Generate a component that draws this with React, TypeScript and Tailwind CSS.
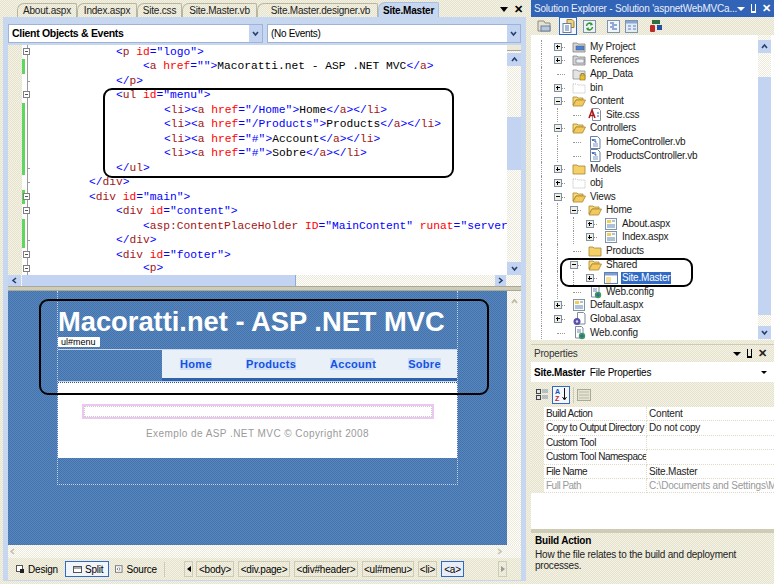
import type { ReactNode } from 'react';

const beige = 'bg-[repeating-conic-gradient(#e6e3cc_0_25%,#f4f2e6_0_50%)] bg-[length:2px_2px]';
const paleTrack = 'bg-[repeating-conic-gradient(#ffffff_0_25%,#ece9d8_0_50%)] bg-[length:2px_2px]';
const designBlue = 'bg-[repeating-conic-gradient(#4272b4_0_25%,#5a88b6_0_50%)] bg-[length:2px_2px]';
const scrollBtn = 'bg-[#c3d4f3]';

interface CodeLine {
  text: string;
  indent: string;
  green?: boolean;
  marker?: 'box' | 'end';
}

const codeLines: CodeLine[] = [
  { text: '<p id="logo">', indent: 'pl-[86px]', marker: 'box' },
  { text: '<a href="">Macoratti.net - ASP .NET MVC</a>', indent: 'pl-[113px]', green: true },
  { text: '</p>', indent: 'pl-[86px]', marker: 'end' },
  { text: '<ul id="menu">', indent: 'pl-[86px]', marker: 'box' },
  { text: '<li><a href="/Home">Home</a></li>', indent: 'pl-[134px]', green: true },
  { text: '<li><a href="/Products">Products</a></li>', indent: 'pl-[134px]', green: true },
  { text: '<li><a href="#">Account</a></li>', indent: 'pl-[134px]', green: true },
  { text: '<li><a href="#">Sobre</a></li>', indent: 'pl-[134px]', green: true },
  { text: '</ul>', indent: 'pl-[86px]', green: true, marker: 'end' },
  { text: '</div>', indent: 'pl-[59px]', marker: 'end' },
  { text: '<div id="main">', indent: 'pl-[59px]', green: true, marker: 'box' },
  { text: '<div id="content">', indent: 'pl-[86px]', marker: 'box' },
  { text: '<asp:ContentPlaceHolder ID="MainContent" runat="server', indent: 'pl-[113px]', green: true },
  { text: '</div>', indent: 'pl-[86px]', green: true, marker: 'end' },
  { text: '<div id="footer">', indent: 'pl-[86px]', marker: 'box' },
  { text: '<p>', indent: 'pl-[113px]', marker: 'box' },
];

// small markup colouriser for the source pane
function colorize(line: string) {
  return line.split(/(<\/?[\w:]+|\s\w+=|"[^"]*"?|>|<\/)/).map((part, i) => {
    if (!part) return null;
    if (part.startsWith('<')) {
      const close = part.startsWith('</') ? 2 : 1;
      return (
        <span key={i}>
          <span className="text-[#0000ff]">{part.slice(0, close)}</span>
          <span className="text-[#a31515]">{part.slice(close)}</span>
        </span>
      );
    }
    if (part.endsWith('=') && part.startsWith(' ')) {
      return (
        <span key={i}>
          <span className="text-[#ff0000]">{part.slice(0, -1)}</span>
          <span className="text-[#0000ff]">=</span>
        </span>
      );
    }
    if (part.startsWith('"') || part === '>') {
      return <span key={i} className="text-[#0000ff]">{part}</span>;
    }
    return <span key={i} className="text-black">{part}</span>;
  });
}

function Chevron({ dir, color = '#2a3f6b' }: { dir: 'up' | 'down' | 'left' | 'right'; color?: string }) {
  const d = {
    up: 'M2 6 L4.5 3 L7 6',
    down: 'M2 3 L4.5 6 L7 3',
    left: 'M6 2 L3 4.5 L6 7',
    right: 'M3 2 L6 4.5 L3 7',
  }[dir];
  return (
    <svg width="9" height="9" viewBox="0 0 9 9">
      <path d={d} fill="none" stroke={color} strokeWidth="1.6" />
    </svg>
  );
}

function Combo({ label, width, bold }: { label: string; width: string; bold?: boolean }) {
  return (
    <div className={`${width} h-[19px] bg-white border border-[#9fb3d6] flex items-center justify-between pl-[3px]`}>
      <span className={bold ? 'font-bold text-[10.5px] tracking-[-0.3px]' : 'text-[10px] tracking-[-0.3px]'}>{label}</span>
      <span className={`w-[13px] h-[17px] ${scrollBtn} flex items-center justify-center`}>
        <Chevron dir="down" />
      </span>
    </div>
  );
}

function DocTab({ label, width, active }: { label: string; width: string; active?: boolean }) {
  return (
    <div
      className={`${width} flex items-center justify-center rounded-tl-[7px] rounded-tr-[2px] border-t border-r border-l ${
        active
          ? 'h-[15px] bg-[#c7d7ef] border-[#a9bfe2] font-bold text-black'
          : 'h-[14px] border-[#b9b69f] text-[#222]'
      }`}
    >
      {label}
    </div>
  );
}

function EditorPane() {
  return (
    <div className="flex h-[230px] bg-white">
      <div className="w-[499px] h-[230px] overflow-hidden font-['Liberation_Mono'] text-[11.25px] leading-[14.47px] whitespace-pre">
        {codeLines.map((line, i) => (
          <div key={i} className="flex h-[14.47px] last:h-[12.9px] last:leading-[12.9px]">
            <div className={`w-[14px] shrink-0 ${beige}`} />
            <div className={`w-[3px] shrink-0 ${line.green ? 'bg-[#5fd75f]' : 'bg-white'}`} />
            <div className="relative w-[5px] shrink-0 flex justify-center">
              <div className="w-px h-full bg-[#9a9a9a]" />
              {line.marker === 'box' && (
                <div className="absolute top-[3px] left-[-2px] w-[7px] h-[7px] bg-white border border-[#808080] flex items-center justify-center">
                  <div className="w-[3px] h-px bg-[#555]" />
                </div>
              )}
              {line.marker === 'end' && <div className="absolute top-[7px] left-[2px] w-[3px] h-px bg-[#9a9a9a]" />}
            </div>
            <div className={`${line.indent} min-w-0`}>{colorize(line.text)}</div>
          </div>
        ))}
      </div>
      <div className={`w-[14px] h-[230px] flex flex-col ${paleTrack}`}>
        <div className="h-[6px] bg-[#ece9d8] border-b border-[#aca899]" />
        <div className={`h-[13px] mt-[2px] ${scrollBtn} flex items-center justify-center`}>
          <Chevron dir="up" />
        </div>
        <div className="h-[51px]" />
        <div className="h-[53px] bg-[#c3d4f3]" />
        <div className="grow" />
        <div className={`h-[13px] ${scrollBtn} flex items-center justify-center`}>
          <Chevron dir="down" />
        </div>
      </div>
    </div>
  );
}

function HScroll({ disabled }: { disabled?: boolean }) {
  if (disabled) {
    return (
      <div className={`flex h-[13px] items-center justify-between pr-[17px] ${paleTrack}`}>
        <Chevron dir="left" color="#c4c1ad" />
        <Chevron dir="right" color="#c4c1ad" />
      </div>
    );
  }
  return (
    <div className={`flex h-[11px] ${paleTrack}`}>
      <div className={`w-[13px] ${scrollBtn} flex items-center justify-center`}>
        <Chevron dir="left" />
      </div>
      <div className="w-[274px] bg-[#c3d4f3] border-r border-[#8fa9dc] ml-px" />
      <div className="grow" />
      <div className={`w-[11px] mr-[15px] ${scrollBtn} flex items-center justify-center`}>
        <Chevron dir="right" />
      </div>
    </div>
  );
}

const menuItems = [
  { label: 'Home', width: 'w-[32px]' },
  { label: 'Products', width: 'w-[50px]' },
  { label: 'Account', width: 'w-[44px]' },
  { label: 'Sobre', width: 'w-[33px]' },
];

function DesignPane() {
  return (
    <div className="flex h-[254px]">
      <div className={`w-[499px] h-[254px] pl-[49px] ${designBlue}`}>
        <div className="w-[401px] h-[194px] border-x border-b border-dotted border-[#c9d7e8]">
          <div className="h-[46px] pt-[15px] text-white font-bold text-[27.3px] leading-[31px] font-['Liberation_Sans'] whitespace-nowrap">
            Macoratti.net - ASP .NET MVC
          </div>
          <div className="w-[42px] h-[10px] bg-white rounded-[1px] text-black text-[9px] leading-[10px] pl-[3px] font-['Liberation_Sans']">
            ul#menu
          </div>
          <div className="flex h-[33px] mt-[2px] border-y border-[#c9d7e8]">
            <div className="w-[104px]" />
            <div className="grow flex flex-col">
              <div className="h-[28px] bg-[#eaf0f8] flex items-center gap-[34px] pl-[18px]">
                {menuItems.map((m) => (
                  <span
                    key={m.label}
                    className={`${m.width} text-center bg-[#cfe0f5] text-[#1450e6] font-bold text-[11px] leading-[12px] tracking-[0.3px] font-['Liberation_Sans'] whitespace-nowrap`}
                  >
                    {m.label}
                  </span>
                ))}
              </div>
              <div className="grow bg-[#2f62ad]" />
            </div>
          </div>
          <div className="h-[76px] bg-white border-t border-dotted border-[#30509a] pt-[21px]">
            <div className="ml-[24px] w-[352px] h-[15px] border-2 border-[#ecc8f0]">
              <div className="h-full border border-dotted border-[#cccccc]" />
            </div>
            <p className="mt-[9px] text-center text-[#9a9a9a] text-[10px] leading-[12px] tracking-[0.43px] font-['Liberation_Sans']">
              Exemplo de ASP .NET MVC © Copyright 2008
            </p>
          </div>
        </div>
      </div>
      <div className={`w-[14px] ${paleTrack}`}>
        <div className="h-[4px]" />
        <div className="h-[13px] flex items-center justify-center">
          <Chevron dir="up" color="#b9b69f" />
        </div>
      </div>
    </div>
  );
}

function PathTag({ label, width, active }: { label: string; width: string; active?: boolean }) {
  return (
    <span
      className={`${width} h-[16px] flex items-center justify-center border ${
        active ? 'border-[#316ac5] bg-[#e8eef9]' : 'border-[#cfccb6]'
      }`}
    >
      {label}
    </span>
  );
}

function BottomBar() {
  return (
    <div className="flex items-center h-[22px] text-[10px] tracking-[-0.2px]">
      <div className="w-[8px]" />
      <div className="w-[49px] flex items-center gap-[4px]">
        <svg width="8" height="9" viewBox="0 0 8 9">
          <rect x="0.5" y="0.5" width="6" height="6" fill="#fff" stroke="#555" />
          <rect x="4" y="4" width="4" height="4" fill="#222" />
        </svg>
        <span>Design</span>
      </div>
      <div className="w-[44px] h-[16px] bg-[#f0f4fb] border border-[#316ac5] flex items-center gap-[3px] pl-[7px]">
        <svg width="9" height="7" viewBox="0 0 9 7">
          <rect x="0.5" y="0.5" width="8" height="6" fill="#fff" stroke="#555" />
          <path d="M1 2h7" stroke="#555" />
        </svg>
        <span>Split</span>
      </div>
      <div className="w-[6px]" />
      <div className="w-[42px] flex items-center gap-[4px]">
        <svg width="8" height="8" viewBox="0 0 8 8">
          <rect x="0.5" y="0.5" width="7" height="7" fill="#fff" stroke="#777" />
          <path d="M3.500 2.500L2 4l1.500 1.500M5 2.500v3" fill="none" stroke="#555" strokeWidth="0.8" />
        </svg>
        <span>Source</span>
      </div>
      <div className="w-px h-[15px] ml-[7px] bg-[#cfccb6]" />
      <div className="w-[19px]" />
      <span className="w-[9px] h-[16px] border border-[#cfccb6] flex items-center justify-center">
        <span className="border-y-[3px] border-r-[4px] border-y-transparent border-r-black" />
      </span>
      <div className="ml-[3px] flex gap-[4px]">
        <PathTag label="<body>" width="w-[38px]" />
        <PathTag label="<div.page>" width="w-[52px]" />
        <PathTag label="<div#header>" width="w-[64px]" />
        <PathTag label="<ul#menu>" width="w-[52px]" />
        <PathTag label="<li>" width="w-[19px]" />
        <PathTag label="<a>" width="w-[23px]" active />
      </div>
      <div className="w-[34px]" />
      <span className="w-[9px] h-[16px] border border-[#cfccb6] flex items-center justify-center">
        <span className="border-y-[3px] border-l-[4px] border-y-transparent border-l-[#999]" />
      </span>
    </div>
  );
}

function LeftColumn() {
  return (
    <div className="w-[531px] h-[584px] shrink-0 pl-[3px] pr-[5px]">
      <div className="relative h-[17px] flex items-end text-[10px] tracking-[-0.2px] pl-[14px]">
        <DocTab label="About.aspx" width="w-[60px]" />
        <DocTab label="Index.aspx" width="w-[60px]" />
        <DocTab label="Site.css" width="w-[45px]" />
        <DocTab label="Site.Master.vb" width="w-[75px]" />
        <DocTab label="Site.Master.designer.vb" width="w-[121px] pl-[6px]" />
        <DocTab label="Site.Master" width="w-[61px]" active />
        <div className="grow flex items-center justify-end gap-[6px] pr-[3px] h-[15px] text-[11px]">
          <span className="border-x-[4px] border-t-[5px] border-x-transparent border-t-black" />
          <span className="font-bold leading-none">✕</span>
        </div>
      </div>
      <div className="h-[564px] border-x-[5px] border-t-[5px] border-b border-[#c7d7ef]">
        <div className="flex justify-between bg-[#c7d7ef] h-[23px] pt-[2px]">
          <Combo label="Client Objects & Events" width="w-[255px]" bold />
          <Combo label="(No Events)" width="w-[254px]" />
        </div>
        <EditorPane />
        <HScroll />
        <div className="h-[5px] bg-[#cfccb6] border-y border-[#aca899]" />
        <DesignPane />
        <HScroll disabled />
        <BottomBar />
      </div>
      {/* hand-drawn callouts over the markup and the design view */}
      <div className="absolute left-[103px] top-[88px] w-[351px] h-[90px] border-2 border-black rounded-[9px]" />
      <div className="absolute left-[39px] top-[299px] w-[450px] h-[96px] border-2 border-black rounded-[9px]" />
    </div>
  );
}

/* ---------- tree icons ---------- */

function FolderOpen() {
  return (
    <svg width="14" height="12" viewBox="0 0 14 12">
      <path d="M1 2h4l1 1h5v2H4L1 10z" fill="#f7d875" stroke="#a8862e" strokeWidth="0.8" />
      <path d="M4 5h9.500l-3 6H1z" fill="#f3c95e" stroke="#a8862e" strokeWidth="0.8" />
    </svg>
  );
}

function FolderClosed({ empty }: { empty?: boolean }) {
  return (
    <svg width="14" height="12" viewBox="0 0 14 12">
      <path
        d="M1 2h4l1 1h7v8H1z"
        fill={empty ? 'none' : '#f5cf68'}
        stroke={empty ? '#aaa' : '#a8862e'}
        strokeWidth="0.8"
        strokeDasharray={empty ? '1 1' : undefined}
      />
    </svg>
  );
}

function DataFolder() {
  return (
    <svg width="14" height="13" viewBox="0 0 14 13">
      <path d="M1 2h4l1 1h7v8H1z" fill="#e4e4e4" stroke="#909090" strokeWidth="0.8" />
      <rect x="8" y="7" width="5" height="5" fill="#e8c030" stroke="#8a7010" strokeWidth="0.6" />
      <path d="M9 7V5.500h3V7" fill="none" stroke="#8a7010" strokeWidth="0.8" />
    </svg>
  );
}

function PageIcon({ kind }: { kind: 'aspx' | 'vb' | 'css' | 'config' | 'asax' | 'master' | 'project' | 'refs' }) {
  if (kind === 'project' || kind === 'refs') {
    return (
      <svg width="14" height="12" viewBox="0 0 14 12">
        <path d="M1 2h4l1 1h7v8H1z" fill="#d5d5d5" stroke="#808080" strokeWidth="0.8" />
        <rect x="4" y="5" width="8" height="4" fill={kind === 'project' ? '#4a80d8' : '#eef2f8'} stroke="#556" strokeWidth="0.5" />
      </svg>
    );
  }
  if (kind === 'master') {
    return (
      <svg width="14" height="12" viewBox="0 0 14 12">
        <rect x="0.5" y="0.5" width="13" height="11" fill="#fff" stroke="#5f7fb0" />
        <rect x="1" y="1" width="12" height="2.500" fill="#7d9fd6" />
        <rect x="2" y="5" width="5" height="6" fill="#f7df93" />
      </svg>
    );
  }
  if (kind === 'aspx') {
    return (
      <svg width="14" height="12" viewBox="0 0 14 12">
        <rect x="1.500" y="0.5" width="11" height="11" fill="#fdfcf0" stroke="#7f93ac" />
        <rect x="3" y="2" width="4" height="3" fill="#f2cc5c" />
        <path d="M8 3h3M3 7h8M3 9h8" stroke="#5f86c4" />
      </svg>
    );
  }
  if (kind === 'vb') {
    return (
      <svg width="14" height="13" viewBox="0 0 14 13">
        <path d="M2.500.5h7l2.500 2.500v9.500h-9.500z" fill="#fff" stroke="#6a7f9e" />
        <path d="M4 3l1 2 1-2M7 3v3h1.500" stroke="#2050b0" fill="none" />
        <path d="M5 8h5M5 10h5" stroke="#7a97c8" />
      </svg>
    );
  }
  if (kind === 'css') {
    return (
      <svg width="14" height="13" viewBox="0 0 14 13">
        <path d="M4.500.5h6l2 2v10h-8z" fill="#fff" stroke="#8a8aa0" />
        <path d="M1 10L4 2l3 8M2.200 7.500h3.600" stroke="#b01818" fill="none" strokeWidth="1.500" />
        <path d="M9 5h2M9 8h2" stroke="#3060c0" />
      </svg>
    );
  }
  if (kind === 'asax') {
    return (
      <svg width="14" height="14" viewBox="0 0 14 14">
        <path d="M5.500.5h6l1.500 1.500v10h-7.500z" fill="#fff" stroke="#7f8aa0" />
        <circle cx="5" cy="9.500" r="3.500" fill="#5a50a8" />
        <circle cx="5" cy="9.500" r="1.200" fill="#d8d4f0" />
      </svg>
    );
  }
  return (
    <svg width="14" height="14" viewBox="0 0 14 14">
      <path d="M3.500.5h6l1.500 1.500v10h-7.500z" fill="#fff" stroke="#7f8aa0" />
      <path d="M5 4h4M5 6h4" stroke="#6f88b8" />
      <circle cx="10" cy="10" r="3.200" fill="#3f9a62" />
      <path d="M8 10h4M10 8v4" stroke="#2b56b5" strokeWidth="0.8" />
    </svg>
  );
}

function ExpandBox({ open }: { open?: boolean }) {
  return (
    <span className="relative w-[8px] h-[8px] bg-[#f1efe2] border border-[#7f8fa6] flex items-center justify-center">
      <span className="w-[4px] h-px bg-black" />
      {!open && <span className="absolute w-px h-[4px] bg-black" />}
    </span>
  );
}

interface TreeItem {
  label: string;
  level: number;
  icon: ReactNode;
  toggle?: 'plus' | 'minus';
  selected?: boolean;
}

const treeItems: TreeItem[] = [
  { label: 'My Project', level: 0, toggle: 'plus', icon: <PageIcon kind="project" /> },
  { label: 'References', level: 0, toggle: 'plus', icon: <PageIcon kind="refs" /> },
  { label: 'App_Data', level: 0, icon: <DataFolder /> },
  { label: 'bin', level: 0, toggle: 'plus', icon: <FolderClosed empty /> },
  { label: 'Content', level: 0, toggle: 'minus', icon: <FolderOpen /> },
  { label: 'Site.css', level: 1, icon: <PageIcon kind="css" /> },
  { label: 'Controllers', level: 0, toggle: 'minus', icon: <FolderOpen /> },
  { label: 'HomeController.vb', level: 1, icon: <PageIcon kind="vb" /> },
  { label: 'ProductsController.vb', level: 1, icon: <PageIcon kind="vb" /> },
  { label: 'Models', level: 0, toggle: 'plus', icon: <FolderClosed /> },
  { label: 'obj', level: 0, toggle: 'plus', icon: <FolderClosed empty /> },
  { label: 'Views', level: 0, toggle: 'minus', icon: <FolderOpen /> },
  { label: 'Home', level: 1, toggle: 'minus', icon: <FolderOpen /> },
  { label: 'About.aspx', level: 2, toggle: 'plus', icon: <PageIcon kind="aspx" /> },
  { label: 'Index.aspx', level: 2, toggle: 'plus', icon: <PageIcon kind="aspx" /> },
  { label: 'Products', level: 1, icon: <FolderClosed /> },
  { label: 'Shared', level: 1, toggle: 'minus', icon: <FolderOpen /> },
  { label: 'Site.Master', level: 2, toggle: 'plus', icon: <PageIcon kind="master" />, selected: true },
  { label: 'Web.config', level: 1, icon: <PageIcon kind="config" /> },
  { label: 'Default.aspx', level: 0, toggle: 'plus', icon: <PageIcon kind="aspx" /> },
  { label: 'Global.asax', level: 0, toggle: 'plus', icon: <PageIcon kind="asax" /> },
  { label: 'Web.config', level: 0, icon: <PageIcon kind="config" /> },
];

function Guide() {
  return (
    <div className="w-[16px] h-full shrink-0 pl-[8px]">
      <div className="h-full border-l border-dotted border-[#999]" />
    </div>
  );
}

function TreeRow({ item }: { item: TreeItem }) {
  return (
    <div className="flex items-center h-[13.62px]">
      <Guide />
      {item.level > 0 && <Guide />}
      {item.level > 1 && <Guide />}
      <div className="relative w-[16px] h-full shrink-0 flex items-center justify-center">
        <div className="absolute left-[8px] right-0 top-1/2 border-t border-dotted border-[#999]" />
        {item.toggle && (
          <div className="relative pl-px">
            <ExpandBox open={item.toggle === 'minus'} />
          </div>
        )}
      </div>
      <div className="w-[14px] ml-[7px] shrink-0 flex items-center justify-center">{item.icon}</div>
      <span
        className={`ml-[3px] px-px leading-[12px] whitespace-nowrap ${item.selected ? 'bg-[#316ac5] text-white' : ''}`}
      >
        {item.label}
      </span>
    </div>
  );
}

function PanelTitle({ label, active }: { label: string; active?: boolean }) {
  return (
    <div
      className={`h-[17px] flex items-center justify-between pl-[3px] pr-[7px] ${
        active ? 'bg-[#3163b6] text-[#e8eefb]' : `${beige} text-[#333]`
      }`}
    >
      <span className="whitespace-nowrap">{label}</span>
      <div className={`flex items-center gap-[6px] ${active ? 'text-white' : 'text-[#222]'}`}>
        <span
          className={`border-x-[4px] border-t-[4px] border-x-transparent ${
            active ? 'border-t-white' : 'border-t-black'
          }`}
        />
        <span className={`w-[5px] h-[9px] border-x-[1.5px] border-b-2 ${active ? 'border-white' : 'border-black'}`} />
        <span className="font-bold text-[11px] leading-none">✕</span>
      </div>
    </div>
  );
}

function ToolBtn({ active, margin, children }: { active?: boolean; margin: string; children: ReactNode }) {
  return (
    <span
      className={`${margin} w-[18px] h-[18px] shrink-0 flex items-center justify-center ${
        active ? 'border border-[#316ac5] bg-[#f4f7fc]' : ''
      }`}
    >
      {children}
    </span>
  );
}

const properties = [
  { name: 'Build Action', value: 'Content' },
  { name: 'Copy to Output Directory', value: 'Do not copy' },
  { name: 'Custom Tool', value: '' },
  { name: 'Custom Tool Namespace', value: '' },
  { name: 'File Name', value: 'Site.Master' },
  { name: 'Full Path', value: 'C:\\Documents and Settings\\M', muted: true },
];

function RightColumn() {
  return (
    <div className="relative w-[243px] h-[584px] flex flex-col text-[10px] tracking-[-0.2px]">
      <PanelTitle label="Solution Explorer - Solution 'aspnetWebMVCa... " active />
      <div className={`h-[18px] flex items-center pl-[4px] ${beige}`}>
        <ToolBtn margin="ml-0">
          <svg width="14" height="13" viewBox="0 0 14 13">
            <path d="M1 1h6l1 2h5v8H1z" fill="#e4e2d2" stroke="#8a8a80" />
            <rect x="4" y="6" width="9" height="5" fill="#b9c7dd" stroke="#6a7f9e" />
          </svg>
        </ToolBtn>
        <ToolBtn margin="ml-[6px]" active>
          <svg width="13" height="14" viewBox="0 0 13 14">
            <path d="M5 .5h5l2 2v6H5z" fill="#f0d27c" stroke="#9a8030" />
            <rect x="1" y="4.500" width="8" height="9" fill="#fff" stroke="#6a7f9e" />
            <path d="M3 7h4M3 9h4M3 11h4" stroke="#4a70b0" />
          </svg>
        </ToolBtn>
        <ToolBtn margin="ml-[3px]">
          <svg width="13" height="13" viewBox="0 0 13 13">
            <rect x="0.5" y="0.5" width="12" height="12" fill="#eef2f8" stroke="#7f93ac" />
            <path d="M3.500 6A3 3 0 0 1 9 4.500M9.500 7A3 3 0 0 1 4 8.500" fill="none" stroke="#2f9a2f" strokeWidth="1.500" />
            <path d="M8 2.500l2 2.500-3 .5zM5 10.500l-2-2.500 3-.5z" fill="#2f9a2f" />
          </svg>
        </ToolBtn>
        <ToolBtn margin="ml-[6px]">
          <svg width="13" height="13" viewBox="0 0 13 13">
            <rect x="0.5" y="0.5" width="12" height="12" fill="#f2f5fb" stroke="#7f93ac" />
            <path d="M3 3h4M5 5h5M3 7h4M5 9h5" stroke="#2f5fb0" />
          </svg>
        </ToolBtn>
        <ToolBtn margin="ml-0">
          <svg width="13" height="13" viewBox="0 0 13 13">
            <rect x="0.5" y="0.5" width="12" height="12" fill="#e3ebf6" stroke="#7f93ac" />
            <rect x="1" y="1" width="11" height="2.500" fill="#8aa6d4" />
            <path d="M3 6h3M8 6h3M3 9h3M8 9h3" stroke="#5f7fb0" />
          </svg>
        </ToolBtn>
        <ToolBtn margin="ml-[7px]">
          <svg width="14" height="14" viewBox="0 0 14 14">
            <rect x="3" y="1" width="8" height="4" fill="#2f6f3f" />
            <rect x="1" y="6" width="5" height="7" rx="1" fill="#c02828" />
            <rect x="8" y="6" width="5" height="5" fill="#2050a8" />
          </svg>
        </ToolBtn>
      </div>
      <div className="h-[305px] bg-white flex">
        <div className="grow pt-[5px] pl-[2px] overflow-hidden text-[#1a1a1a]">
          {treeItems.map((item, i) => (
            <TreeRow key={i} item={item} />
          ))}
        </div>
        <div className={`w-[13px] mr-[3px] flex flex-col ${paleTrack}`}>
          <div className={`h-[13px] mt-[5px] ${scrollBtn} flex items-center justify-center`}>
            <Chevron dir="up" />
          </div>
          <div className="h-[24px]" />
          <div className="h-[238px] bg-[#c3d4f3]" />
          <div className="grow" />
          <div className={`h-[13px] mb-px ${scrollBtn} flex items-center justify-center`}>
            <Chevron dir="down" />
          </div>
        </div>
      </div>
      <div className="h-[5px] border-b border-[#cfccb6]" />
      <PanelTitle label="Properties" />
      <div className="h-[20px] bg-white flex items-center justify-between pl-[3px] pr-[7px]">
        <span>
          <b className="font-bold">Site.Master</b> <span className="ml-[2px]">File Properties</span>
        </span>
        <span className="border-x-[3px] border-t-[3px] border-x-transparent border-t-black" />
      </div>
      <div className={`h-[25px] flex items-center pl-[2px] ${beige}`}>
        <ToolBtn margin="ml-0">
          <svg width="13" height="13" viewBox="0 0 13 13">
            <rect x="0.5" y="1.500" width="4" height="4" fill="#dfe7f3" stroke="#444" />
            <rect x="0.5" y="7.500" width="4" height="4" fill="#dfe7f3" stroke="#444" />
            <path d="M6 2h6M6 4h6M6 8h6M6 10h6" stroke="#7f93ac" />
          </svg>
        </ToolBtn>
        <ToolBtn margin="ml-px" active>
          <span className="flex items-center gap-[2px]">
            <span className="flex flex-col text-[7px] leading-[7px] font-bold tracking-normal">
              <span className="text-[#2050b0]">A</span>
              <span className="text-[#c02828]">Z</span>
            </span>
            <svg width="5" height="13" viewBox="0 0 5 13">
              <path d="M2.500 0v11M0.500 9l2 3 2-3" fill="none" stroke="#111" />
            </svg>
          </span>
        </ToolBtn>
        <span className="ml-[3px] w-px h-[16px] bg-[#cfccb6]" />
        <ToolBtn margin="ml-px">
          <svg width="14" height="12" viewBox="0 0 14 12">
            <rect x="0.5" y="0.5" width="13" height="11" fill="#e4e2d2" stroke="#aaa898" />
            <path d="M2 3h10M2 6h10M2 9h10" stroke="#bbb9a8" />
          </svg>
        </ToolBtn>
      </div>
      <div className="grow bg-white">
        {properties.map((p) => (
          <div key={p.name} className={`flex h-[14.4px] items-center ${p.muted ? 'text-[#999]' : 'text-[#222]'}`}>
            <div className={`w-[13px] h-full shrink-0 ${beige}`} />
            <div className="w-[103px] pl-[2px] overflow-hidden whitespace-nowrap shrink-0 border-r border-b border-dotted border-[#dddbc8] h-full leading-[14px] tracking-[-0.5px]">
              {p.name}
            </div>
            <div className="pl-[2px] grow overflow-hidden whitespace-nowrap border-b border-dotted border-[#dddbc8] h-full leading-[14px]">
              {p.value}
            </div>
          </div>
        ))}
      </div>
      <div className={`h-[55px] border-t-4 border-[#cfccb6] pt-[2px] pl-[4px] ${beige}`}>
        <div className="font-bold leading-[12px] text-black">Build Action</div>
        <div className="mt-[2px] w-[205px] leading-[11px] text-[#222]">
          How the file relates to the build and deployment processes.
        </div>
      </div>
      <div className="absolute left-[29px] top-[258px] w-[133px] h-[29px] border-2 border-black rounded-[9px]" />
    </div>
  );
}

export default function App() {
  return (
    <div className={`relative flex w-[774px] h-[584px] overflow-hidden font-['Liberation_Sans'] ${beige}`}>
      <LeftColumn />
      <RightColumn />
    </div>
  );
}
